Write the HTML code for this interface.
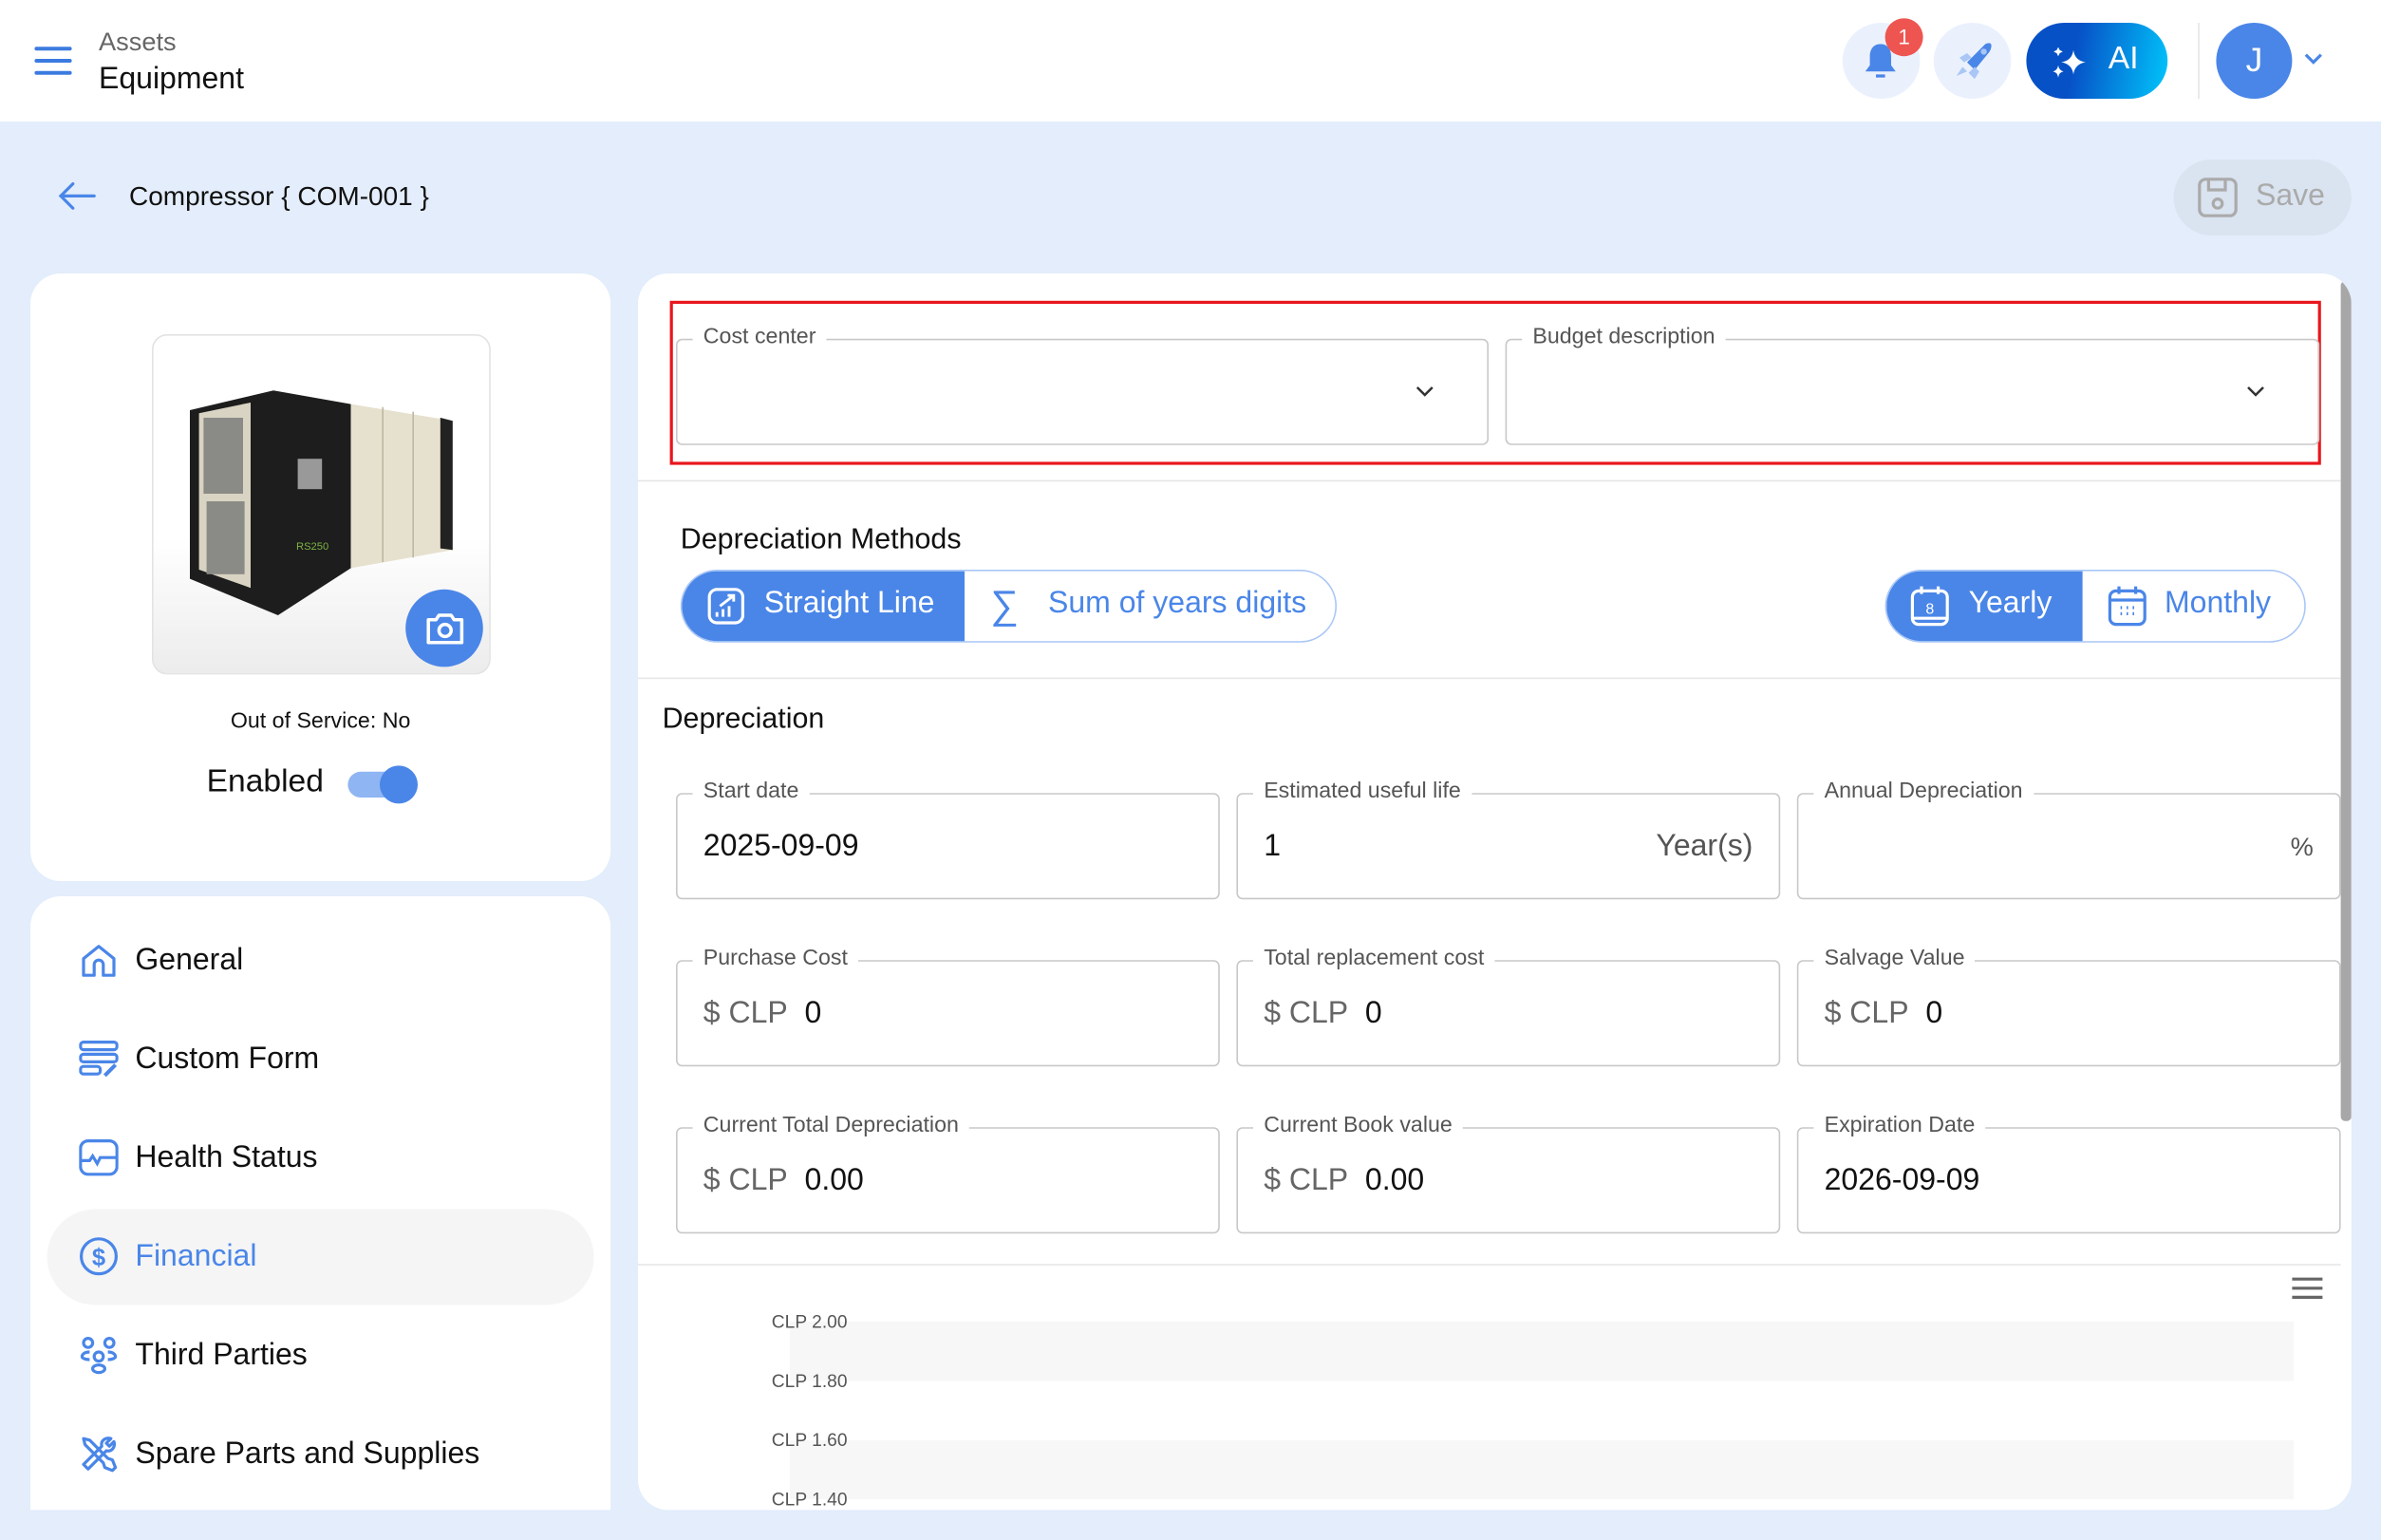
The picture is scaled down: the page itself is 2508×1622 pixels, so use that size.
<!DOCTYPE html>
<html><head><meta charset="utf-8">
<style>
*{box-sizing:border-box;margin:0;padding:0}
html,body{width:2508px;height:1622px;overflow:hidden;background:#e3edfb}
#root{width:1568px;height:1014px;transform:scale(1.6);transform-origin:0 0;position:relative;font-family:"Liberation Sans",sans-serif;color:#111}
.abs{position:absolute}
.card{position:absolute;background:#fff;border-radius:20px}
.fld{position:absolute;border:1px solid #c8c8c8;border-radius:4px;height:70px}
.fld .lb{position:absolute;top:-10px;left:10px;background:#fff;padding:0 7px;font-size:14.5px;color:#555}
.fld .v{position:absolute;left:17px;top:23px;font-size:20px;color:#111}
.fld .v .g{color:#666}
.mi{position:absolute;left:52px;font-size:20px;display:flex;align-items:center;gap:11px}
.mi svg{width:26px;height:26px}
.ylab{position:absolute;left:508px;font-size:12px;color:#555}
</style></head><body><div id="root">
<!-- header -->
<div class="abs" style="left:0;top:0;width:1568px;height:80px;background:#fff"></div>
<svg class="abs" style="left:22px;top:29px" width="26" height="22"><path d="M2 3h22M2 11h22M2 19h22" stroke="#3b7be0" stroke-width="2.5" stroke-linecap="round"/></svg>
<div class="abs" style="left:65px;top:18px;font-size:17px;color:#666">Assets</div>
<div class="abs" style="left:65px;top:41px;font-size:20px;color:#111">Equipment</div>
<div class="abs" style="left:1213px;top:15px;width:51px;height:50px;border-radius:50%;background:#eaf1fd"></div>
<svg class="abs" style="left:1225px;top:26px" width="26" height="28"><path d="M13 3c-5 0-7 4-7 8v6l-3 4h20l-3-4v-6c0-4-2-8-7-8z" fill="#4a86e8"/><path d="M10 24h6" stroke="#4a86e8" stroke-width="2"/></svg>
<div class="abs" style="left:1241px;top:12px;width:25px;height:25px;border-radius:50%;background:#ee5551;color:#fff;font-size:14px;text-align:center;line-height:25px">1</div>
<div class="abs" style="left:1273px;top:15px;width:51px;height:50px;border-radius:50%;background:#eaf1fd"></div>
<svg class="abs" style="left:1284px;top:26px" width="30" height="28"><path d="M16 20l-5-5L23 3c2-1 4-1 4 1 0 2-1 4-2 5z" fill="#4a86e8"/><path d="M6 12l5-3 3 3-5 3zM12 22l4-4 3 3-3 5zM4 24l4-6 3 3z" fill="#a9c6f6"/><circle cx="22" cy="8" r="2" fill="#a9c6f6"/></svg>
<div class="abs" style="left:1334px;top:15px;width:93px;height:50px;border-radius:25px;background:linear-gradient(100deg,#0751c7 35%,#00c6fb)"></div>
<svg class="abs" style="left:1349px;top:27px" width="28" height="28"><path d="M16 6q1 7 8 8q-7 1-8 8q-1-7-8-8q7-1 8-8z" fill="#fff"/><path d="M6 16q.5 3.5 3.5 4q-3 .5-3.5 4q-.5-3.5-3.5-4q3-.5 3.5-4zM6 4l1 2 2 1-2 1-1 2-1-2-2-1 2-1z" fill="#fff"/></svg>
<div class="abs" style="left:1388px;top:27px;font-size:21px;color:#fff">AI</div>
<div class="abs" style="left:1447px;top:15px;width:1px;height:50px;background:#e5e5e5"></div>
<div class="abs" style="left:1459px;top:15px;width:50px;height:50px;border-radius:50%;background:#4a86e8;color:#fff;font-size:22px;text-align:center;line-height:50px">J</div>
<svg class="abs" style="left:1516px;top:34px" width="14" height="10"><path d="M2 2l5 5 5-5" stroke="#4a86e8" stroke-width="2" fill="none"/></svg>
<!-- title row -->
<svg class="abs" style="left:36px;top:118px" width="28" height="22"><path d="M26 11H4M12 3l-8 8 8 8" stroke="#4a86e8" stroke-width="2" fill="none" stroke-linecap="round"/></svg>
<div class="abs" style="left:85px;top:119px;font-size:17.5px">Compressor { COM-001 }</div>
<div class="abs" style="left:1431px;top:105px;width:117px;height:50px;border-radius:25px;background:#dae3f0"></div>
<svg class="abs" style="left:1446px;top:116px" width="30" height="28"><rect x="2" y="2" width="24" height="24" rx="4" stroke="#aaa" stroke-width="2" fill="none"/><path d="M8 2v7h11V2" stroke="#aaa" stroke-width="2" fill="none"/><circle cx="14" cy="18" r="3" stroke="#aaa" stroke-width="2" fill="none"/></svg>
<div class="abs" style="left:1485px;top:118px;font-size:20px;color:#aaa">Save</div>
<!-- left card 1 -->
<div class="card" style="left:20px;top:180px;width:382px;height:400px"></div>
<div class="abs" style="left:100px;top:220px;width:223px;height:224px;border:1px solid #e3e3e3;border-radius:10px;background:linear-gradient(#fff 60%,#ececec);overflow:hidden"></div>
<svg class="abs" style="left:0;top:0" width="400" height="450">
<polygon points="125,270 180,257 231,266 231,374 183,405 125,381" fill="#1d1d1d"/>
<polygon points="131,272 165,265 165,387 131,375" fill="#d8d3c2"/>
<rect x="134" y="275" width="26" height="50" fill="#8a8a86"/><rect x="136" y="330" width="25" height="48" fill="#8a8a86"/>
<polygon points="231,266 298,277 298,362 231,374" fill="#e6e0ce"/>
<path d="M252 268v102M272 271v96M290 275v86" stroke="#bdb7a3"/>
<polygon points="290,275 298,277 298,362 290,361" fill="#222"/>
<rect x="196" y="302" width="16" height="20" fill="#999"/>
<text x="195" y="362" font-size="7" fill="#7cb342" font-family="Liberation Sans">RS250</text>
</svg>
<div class="abs" style="left:267px;top:388px;width:51px;height:51px;border-radius:50%;background:#4a86e8"></div>
<svg class="abs" style="left:279px;top:400px" width="28" height="27"><path d="M3 8h5l2-3h8l2 3h5v15H3z" stroke="#fff" stroke-width="2.2" fill="none" stroke-linejoin="round"/><circle cx="14" cy="15" r="4" stroke="#fff" stroke-width="2.2" fill="none"/></svg>
<div class="abs" style="left:20px;top:467px;width:382px;text-align:center;font-size:14.5px">Out of Service: No</div>
<div class="abs" style="left:136px;top:503px;font-size:21px">Enabled</div>
<div class="abs" style="left:229px;top:508px;width:44px;height:17px;border-radius:9px;background:#8fb5f2"></div>
<div class="abs" style="left:250px;top:504px;width:25px;height:25px;border-radius:50%;background:#4a86e8"></div>
<!-- left card 2 -->
<div class="card" style="left:20px;top:590px;width:382px;height:430px"></div>
<div class="abs" style="left:31px;top:796px;width:360px;height:63px;border-radius:32px;background:#f5f5f5"></div>
<div class="mi" style="top:619px"><svg viewBox="0 0 26 26"><path d="M3 12L13 4l10 8v11h-7v-7a3 3 0 0 0-6 0v7H3z" stroke="#4a86e8" stroke-width="2" fill="none" stroke-linejoin="round"/></svg>General</div>
<div class="mi" style="top:684px"><svg viewBox="0 0 26 26"><rect x="1" y="2" width="24" height="5" rx="2" stroke="#4a86e8" stroke-width="2" fill="none"/><rect x="1" y="10" width="24" height="5" rx="2" stroke="#4a86e8" stroke-width="2" fill="none"/><rect x="1" y="18" width="13" height="5" rx="2" stroke="#4a86e8" stroke-width="2" fill="none"/><path d="M17 24l7-7" stroke="#4a86e8" stroke-width="2.5"/></svg>Custom Form</div>
<div class="mi" style="top:749px"><svg viewBox="0 0 26 26"><rect x="1" y="2" width="24" height="22" rx="5" stroke="#4a86e8" stroke-width="2" fill="none"/><path d="M1 15h6l2-3 3 5 2-4h11" stroke="#4a86e8" stroke-width="2" fill="none"/></svg>Health Status</div>
<div class="mi" style="top:814px;color:#4a86e8"><svg viewBox="0 0 26 26"><circle cx="13" cy="13" r="11.5" stroke="#4a86e8" stroke-width="2" fill="none"/><text x="13" y="19" font-size="16" text-anchor="middle" fill="#4a86e8" font-weight="bold" font-family="Liberation Sans">$</text></svg>Financial</div>
<div class="mi" style="top:879px"><svg viewBox="0 0 26 26"><circle cx="6" cy="5" r="3" stroke="#4a86e8" stroke-width="2" fill="none"/><circle cx="20" cy="5" r="3" stroke="#4a86e8" stroke-width="2" fill="none"/><circle cx="13" cy="14" r="3" stroke="#4a86e8" stroke-width="2" fill="none"/><ellipse cx="13" cy="22" rx="4" ry="2.5" stroke="#4a86e8" stroke-width="2" fill="none"/><path d="M7 11c-4 0-5 2-5 3s2 2 5 2M19 11c4 0 5 2 5 3s-2 2-5 2" stroke="#4a86e8" stroke-width="2" fill="none"/></svg>Third Parties</div>
<div class="mi" style="top:944px"><svg viewBox="0 0 26 26"><path d="M3 3l4 1 12 12 3 1 2 5-2 2-5-2-1-3L4 7z" stroke="#4a86e8" stroke-width="2" fill="none" stroke-linejoin="round"/><path d="M21 3l-3 3 2 2 3-3c1 3-1 7-5 6L6 23l-3-3 12-12c-1-4 3-6 6-5z" stroke="#4a86e8" stroke-width="2" fill="none" stroke-linejoin="round"/></svg>Spare Parts and Supplies</div>
<!-- right card -->
<div class="card" style="left:420px;top:180px;width:1128px;height:814px;overflow:hidden">
<div class="abs" style="left:1121px;top:5px;width:7px;height:553px;background:#a7a7a7;border-radius:3px"></div>
</div>
<div class="abs" style="left:441px;top:198px;width:1087px;height:108px;border:2px solid #e8161d"></div>
<div class="fld" style="left:445px;top:223px;width:535px"><span class="lb">Cost center</span></div>
<svg class="abs" style="left:931px;top:253px" width="14" height="10"><path d="M2 2l5 5 5-5" stroke="#333" stroke-width="1.6" fill="none"/></svg>
<div class="fld" style="left:991px;top:223px;width:536px"><span class="lb">Budget description</span></div>
<svg class="abs" style="left:1478px;top:253px" width="14" height="10"><path d="M2 2l5 5 5-5" stroke="#333" stroke-width="1.6" fill="none"/></svg>
<div class="abs" style="left:420px;top:316px;width:1121px;height:1px;background:#e6e6e6"></div>
<div class="abs" style="left:448px;top:345px;font-size:19px">Depreciation Methods</div>
<div class="abs" style="left:448px;top:375px;width:432px;height:48px;border:1px solid #a9c6f6;border-radius:24px;overflow:hidden">
 <div class="abs" style="left:0;top:0;width:186px;height:48px;background:#4a86e8"></div>
</div>
<svg class="abs" style="left:465px;top:386px" width="27" height="27"><rect x="2" y="2" width="22" height="22" rx="5" stroke="#fff" stroke-width="2" fill="none"/><path d="M7 20v-3M11 20v-5M15 20v-7M9 13l9-7M14 6h4v4" stroke="#fff" stroke-width="1.8" fill="none"/></svg>
<div class="abs" style="left:503px;top:386px;font-size:20px;color:#fff">Straight Line</div>
<div class="abs" style="left:652px;top:383px;font-size:26px;color:#4a86e8">∑</div>
<div class="abs" style="left:690px;top:386px;font-size:20px;color:#4a86e8">Sum of years digits</div>
<div class="abs" style="left:1241px;top:375px;width:277px;height:48px;border:1px solid #a9c6f6;border-radius:24px;overflow:hidden">
 <div class="abs" style="left:0;top:0;width:129px;height:48px;background:#4a86e8"></div>
</div>
<svg class="abs" style="left:1257px;top:385px" width="27" height="28"><rect x="2" y="4" width="23" height="22" rx="4" stroke="#fff" stroke-width="2" fill="none"/><path d="M8 1v5M19 1v5M2 22h23" stroke="#fff" stroke-width="2"/><text x="13.5" y="19" font-size="10" text-anchor="middle" fill="#fff" font-family="Liberation Sans">8</text></svg>
<div class="abs" style="left:1296px;top:386px;font-size:20px;color:#fff">Yearly</div>
<svg class="abs" style="left:1387px;top:385px" width="27" height="28"><rect x="2" y="4" width="23" height="22" rx="4" stroke="#4a86e8" stroke-width="2" fill="none"/><path d="M8 1v5M19 1v5M2 10h23" stroke="#4a86e8" stroke-width="2"/><path d="M9 15h1M13 15h1M17 15h1M9 19h1M13 19h1M17 19h1" stroke="#4a86e8" stroke-width="2"/></svg>
<div class="abs" style="left:1425px;top:386px;font-size:20px;color:#4a86e8">Monthly</div>
<div class="abs" style="left:420px;top:446px;width:1121px;height:1px;background:#e6e6e6"></div>
<div class="abs" style="left:436px;top:463px;font-size:19px">Depreciation</div>

<div class="fld" style="left:445px;top:522px;width:358px"><span class="lb">Start date</span><span class="v">2025-09-09</span></div>
<div class="fld" style="left:814px;top:522px;width:358px"><span class="lb">Estimated useful life</span><span class="v">1</span><span class="v" style="left:auto;right:17px;color:#555">Year(s)</span></div>
<div class="fld" style="left:1183px;top:522px;width:358px"><span class="lb">Annual Depreciation</span><span class="v" style="left:auto;right:17px;color:#555;font-size:17px;top:25px">%</span></div>

<div class="fld" style="left:445px;top:632px;width:358px"><span class="lb">Purchase Cost</span><span class="v"><span class="g">$ CLP</span>&nbsp; 0</span></div>
<div class="fld" style="left:814px;top:632px;width:358px"><span class="lb">Total replacement cost</span><span class="v"><span class="g">$ CLP</span>&nbsp; 0</span></div>
<div class="fld" style="left:1183px;top:632px;width:358px"><span class="lb">Salvage Value</span><span class="v"><span class="g">$ CLP</span>&nbsp; 0</span></div>

<div class="fld" style="left:445px;top:742px;width:358px"><span class="lb">Current Total Depreciation</span><span class="v"><span class="g">$ CLP</span>&nbsp; 0.00</span></div>
<div class="fld" style="left:814px;top:742px;width:358px"><span class="lb">Current Book value</span><span class="v"><span class="g">$ CLP</span>&nbsp; 0.00</span></div>
<div class="fld" style="left:1183px;top:742px;width:358px"><span class="lb">Expiration Date</span><span class="v">2026-09-09</span></div>

<div class="abs" style="left:420px;top:832px;width:1121px;height:1px;background:#e6e6e6"></div>
<svg class="abs" style="left:1508px;top:840px" width="22" height="16"><path d="M1 2h20M1 8h20M1 14h20" stroke="#666" stroke-width="2"/></svg>
<div class="abs" style="left:520px;top:870px;width:990px;height:39px;background:#f7f7f7"></div>
<div class="abs" style="left:520px;top:948px;width:990px;height:39px;background:#f7f7f7"></div>
<div class="ylab" style="top:863px">CLP 2.00</div>
<div class="ylab" style="top:902px">CLP 1.80</div>
<div class="ylab" style="top:941px">CLP 1.60</div>
<div class="ylab" style="top:980px">CLP 1.40</div>
<div class="abs" style="left:0;top:994px;width:1568px;height:20px;background:#e3edfb"></div>
</div></body></html>
